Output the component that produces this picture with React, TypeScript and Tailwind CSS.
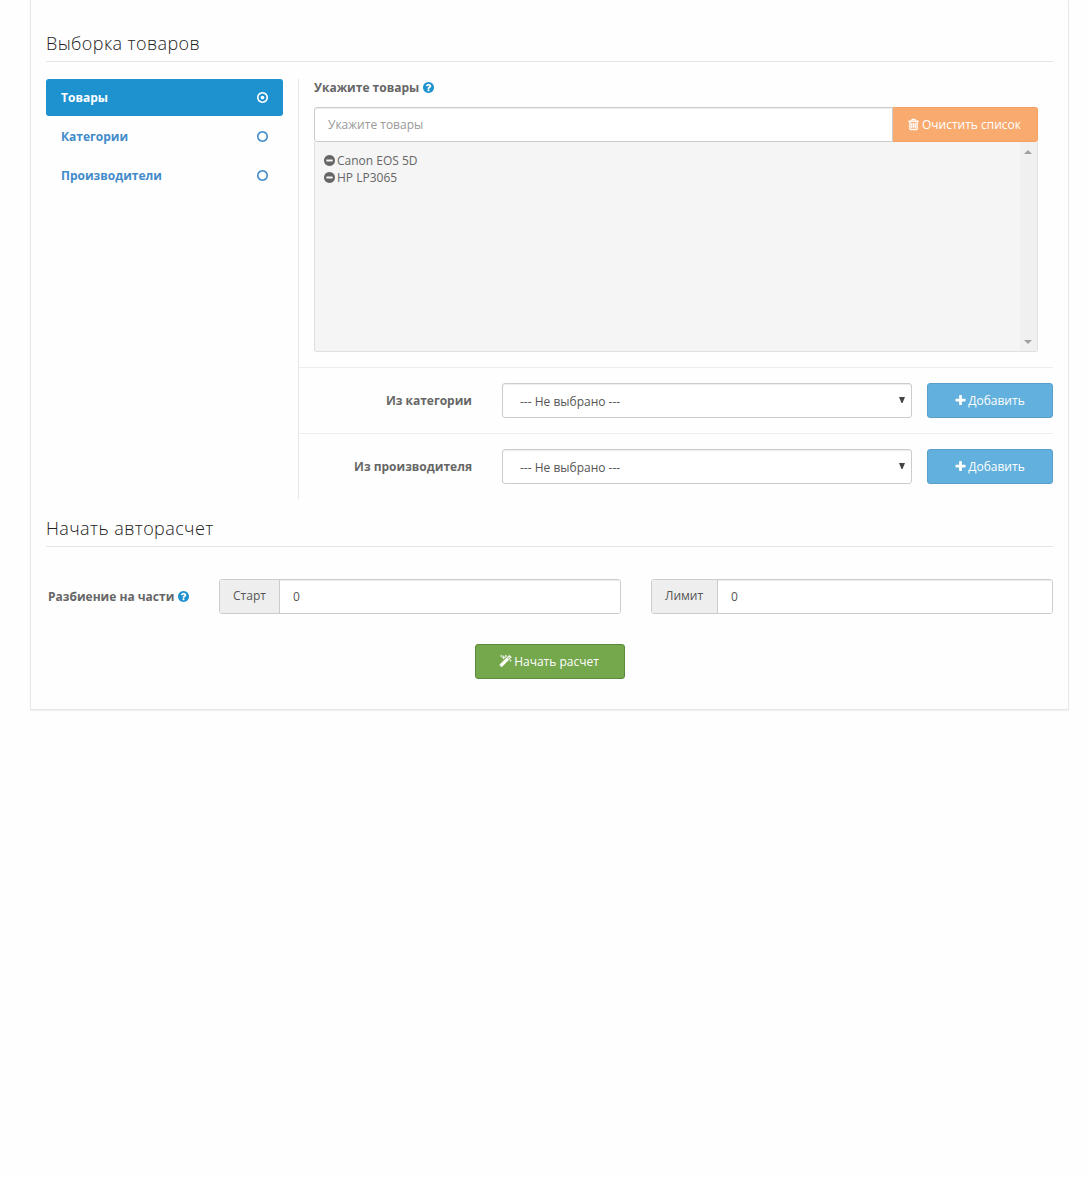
import { useState } from "react";

// Icons (1792 grid) ---------------------------------------------------------------------------------//
const ring =
  "M896 352q-148 0-273 73t-198 198-73 273 73 273 198 198 273 73 273-73 198-198 73-273-73-273-198-198-273-73zm768 544q0 209-103 385.5t-279.5 279.5-385.5 103-385.5-103-279.5-279.5-103-385.5 103-385.5 279.5-279.5 385.5-103 385.5 103 279.5 279.5 103 385.5z";
const disc =
  "q0 209-103 385.5t-279.5 279.5-385.5 103-385.5-103-279.5-279.5-103-385.5 103-385.5 279.5-279.5 385.5-103 385.5 103 279.5 279.5 103 385.5z";

const icons = {
  circle: ring,
  dotCircle: "M1152 896q0 106-75 181t-181 75-181-75-75-181 75-181 181-75 181 75 75 181z" + ring,
  question:
    "M1024 1376v-192q0-14-9-23t-23-9h-192q-14 0-23 9t-9 23v192q0 14 9 23t23 9h192q14 0 23-9t9-23zm256-672q0-88-55.5-163t-138.5-116-170-41q-243 0-371 213-15 24 8 42l132 100q7 6 19 6 16 0 25-12 53-68 86-92 34-24 86-24 48 0 85.5 26t37.5 59q0 38-20 61t-68 45q-63 28-115.5 86.5t-52.5 125.5v36q0 14 9 23t23 9h192q14 0 23-9t9-23q0-19 21.5-49.5t54.5-49.5q32-18 49-28.5t46-35 44.5-48 28-60.5 12.5-81zm384 192" +
    disc,
  minus:
    "M1344 960v-128q0-26-19-45t-45-19h-768q-26 0-45 19t-19 45v128q0 26 19 45t45 19h768q26 0 45-19t19-45zm320-64" +
    disc,
  plus: "M1600 736v192q0 40-28 68t-68 28h-416v416q0 40-28 68t-68 28h-192q-40 0-68-28t-28-68v-416h-416q-40 0-68-28t-28-68v-192q0-40 28-68t68-28h416v-416q0-40 28-68t68-28h192q40 0 68 28t28 68v416h416q40 0 68 28t28 68z",
  trash:
    "M704 736v576q0 14-9 23t-23 9h-64q-14 0-23-9t-9-23v-576q0-14 9-23t23-9h64q14 0 23 9t9 23zm256 0v576q0 14-9 23t-23 9h-64q-14 0-23-9t-9-23v-576q0-14 9-23t23-9h64q14 0 23 9t9 23zm256 0v576q0 14-9 23t-23 9h-64q-14 0-23-9t-9-23v-576q0-14 9-23t23-9h64q14 0 23 9t9 23zm128 724v-948h-896v948q0 22 7 40.5t14.5 27 10.5 8.5h832q3 0 10.5-8.5t14.5-27 7-40.5zm-672-1076h448l-48-117q-7-9-17-11h-317q-10 2-17 11zm928 32v64q0 14-9 23t-23 9h-96v948q0 83-47 143.5t-113 60.5h-832q-66 0-113-58.5t-47-141.5v-952h-96q-14 0-23-9t-9-23v-64q0-14 9-23t23-9h309l70-167q15-37 54-63t79-26h320q40 0 79 26t54 63l70 167h309q14 0 23 9t9 23z",
  magic:
    "M1254 581l293-293-107-107-293 293zm447-293q0 27-18 45l-1286 1286q-18 18-45 18t-45-18l-198-198q-18-18-18-45t18-45l1286-1286q18-18 45-18t45 18l198 198q18 18 18 45zm-1351-190l98 30-98 30-30 98-30-98-98-30 98-30 30-98zm350 162l196 60-196 60-60 196-60-196-196-60 196-60 60-196zm930 478l98 30-98 30-30 98-30-98-98-30 98-30 30-98zm-640-640l98 30-98 30-30 98-30-98-98-30 98-30 30-98z",
};

function Icon({ name, className = "" }: { name: keyof typeof icons; className?: string }) {
  return (
    <svg viewBox="128 128 1536 1536" className={`size-[11px] shrink-0 overflow-visible fill-current ${className}`}>
      <path d={icons[name]} />
    </svg>
  );
}

// Section title -------------------------------------------------------------------------------------//
function Legend({ children }: { children: React.ReactNode }) {
  return (
    <h2 className="h-[35px] border-b border-[#e5e5e5] text-[18px] leading-[32px] font-light tracking-[0.4px] text-[#222]">
      {children}
    </h2>
  );
}

// Select + add button -------------------------------------------------------------------------------//
function AddRow({ label, id }: { label: string; id: string }) {
  return (
    <div className="flex h-[66px] items-center border-t border-[#ededed]">
      <label htmlFor={id} className="w-[173px] text-right font-bold">
        {label}
      </label>
      <div className="relative ml-[30px] w-[410px]">
        <select
          id={id}
          className="block h-[35px] w-full appearance-none rounded-[3px] border border-[#ccc] bg-white pt-[2px] pl-[17px] text-[#555] shadow-[inset_0_1px_1px_rgba(0,0,0,0.075)]"
        >
          <option>--- Не выбрано ---</option>
        </select>
        <svg viewBox="0 0 6 6" className="pointer-events-none absolute top-[14px] right-[7px] h-[6px] w-[6px] fill-[#444]">
          <path d="M0 0h6L3.5 6h-1z" />
        </svg>
      </div>
      <button className="ml-[15px] flex h-[35px] w-[126px] items-center justify-center gap-[2px] rounded-[3px] border border-[#5a9fc9] bg-[#62b0dd] text-white">
        <Icon name="plus" />
        Добавить
      </button>
    </div>
  );
}

// Input with addon ----------------------------------------------------------------------------------//
function AddonInput({ label, addonClass, className }: { label: string; addonClass: string; className: string }) {
  return (
    <div className={`flex h-[35px] rounded-[3px] border border-[#ccc] ${className}`}>
      <span
        className={`rounded-l-[2px] border-r border-[#ccc] bg-[#eee] pl-[13px] leading-[32px] text-[#555] ${addonClass}`}
      >
        {label}
      </span>
      <input
        defaultValue="0"
        className="w-0 grow rounded-r-[2px] bg-white px-[13px] text-[#555] shadow-[inset_0_1px_1px_rgba(0,0,0,0.075)] outline-none"
      />
    </div>
  );
}

const tabs = ["Товары", "Категории", "Производители"];
const products = ["Canon EOS 5D", "HP LP3065"];

export default function App() {
  const [active, setActive] = useState(0);
  const [list, setList] = useState(products);

  return (
    <div className="min-h-[1177px] bg-[#fefefe] pr-[20px] pl-[30px] font-['Open_Sans',sans-serif] text-[12px] leading-[17px] text-[#666]">
      <div className="h-[710px] border border-t-0 border-[#e8e8e8] px-[15px] pt-[27px] shadow-[0_1px_1px_rgba(0,0,0,0.05)]">
        <Legend>Выборка товаров</Legend>

        <div className="mt-[17px] flex">
          {/* Tabs */}
          <nav className="flex w-[237px] flex-col gap-[2px]">
            {tabs.map((tab, i) => (
              <button
                key={tab}
                onClick={() => setActive(i)}
                className={`flex h-[37px] items-center justify-between rounded-[3px] px-[15px] font-bold ${
                  active === i ? "bg-[#1e91cf] text-white" : "text-[#428bca]"
                }`}
              >
                {tab}
                <Icon name={active === i ? "dotCircle" : "circle"} />
              </button>
            ))}
          </nav>

          {/* Products */}
          <div className="ml-[15px] h-[420px] grow border-l border-[#e5e5e5]">
            <div className="h-[288px] px-[15px]">
              <div className="flex h-[28px] items-start gap-[4px] font-bold">
                Укажите товары
                <Icon name="question" className="mt-[3px] -ml-[0.5px] text-[#1e91cf]" />
              </div>
              <div className="flex h-[35px]">
                <input
                  placeholder="Укажите товары"
                  className="w-0 grow rounded-l-[3px] border border-[#ccc] bg-white px-[13px] shadow-[inset_0_1px_1px_rgba(0,0,0,0.075)] outline-none placeholder:text-[#999]"
                />
                <button
                  onClick={() => setList([])}
                  className="flex w-[145px] items-center justify-center gap-[3px] rounded-r-[3px] border border-l-0 border-[#f4a268] bg-[#f8aa6f] pr-px text-white"
                >
                  <Icon name="trash" className="stroke-current stroke-[70]" />
                  Очистить список
                </button>
              </div>
              <div className="flex h-[210px] justify-between rounded-b-[3px] border border-t-0 border-[#e0e0e0] bg-[#f5f5f5]">
                <ul className="px-[8.5px] pt-[10px]">
                  {list.map((item) => (
                    <li key={item} className="flex items-center gap-[2.5px]">
                      <Icon name="minus" />
                      {item}
                    </li>
                  ))}
                </ul>
                <div className="flex w-[17px] flex-col items-center justify-between bg-[#f0f0f0] pt-[8px] pr-px pb-[7px]">
                  <svg viewBox="0 0 8 4" className="h-[4px] w-[8px] fill-[#a0a0a0]">
                    <path d="M0 4L4 0l4 4z" />
                  </svg>
                  <svg viewBox="0 0 8 4" className="h-[4px] w-[8px] fill-[#a0a0a0]">
                    <path d="M0 0l4 4 4-4z" />
                  </svg>
                </div>
              </div>
            </div>
            <AddRow label="Из категории" id="category" />
            <AddRow label="Из производителя" id="manufacturer" />
          </div>
        </div>

        <div className="mt-[13px]">
          <Legend>Начать авторасчет</Legend>
        </div>

        <div className="mt-[32px] flex items-center">
          <div className="flex w-[173px] items-center gap-[4px] pl-[2px] font-bold">
            Разбиение на части
            <Icon name="question" className="text-[#1e91cf]" />
          </div>
          <AddonInput label="Старт" addonClass="w-[60px]" className="w-[402px]" />
          <AddonInput label="Лимит" addonClass="w-[66px]" className="ml-[30px] w-[402px]" />
        </div>

        <button className="mx-auto mt-[30px] flex h-[35px] w-[150px] items-center justify-center gap-[3px] rounded-[3px] border border-[#5c8a3a] bg-[#75a74d] text-white">
          <Icon name="magic" className="stroke-current stroke-[60]" />
          Начать расчет
        </button>
      </div>
    </div>
  );
}
